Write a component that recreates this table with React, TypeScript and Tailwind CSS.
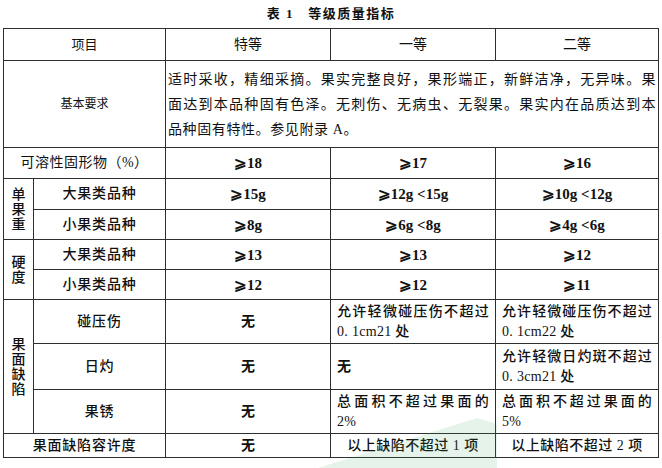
const font = "font-['Liberation_Serif','Noto_Sans_CJK_SC',serif]";
const cell = 'border border-[#2e2e2e] p-0 text-center align-middle leading-[18px]';
const num = 'border border-[#2e2e2e] p-0 text-center align-middle leading-[18px] text-[15px] font-bold';
const label = 'border border-[#2e2e2e] p-0 text-center align-middle leading-[18px] font-medium tracking-[0.8px]';

function Stack({ chars }: { chars: string }) {
  return (
    <div className="flex flex-col items-center text-[14px] leading-[15px] font-medium">
      {chars.split('').map((c, i) => (
        <span key={i}>{c}</span>
      ))}
    </div>
  );
}

function TwoLine({ first, second }: { first: string; second: string }) {
  return (
    <div className="px-[6px] text-left text-[14px] leading-[20px] font-medium tracking-[0.3px]">
      <div className="whitespace-nowrap text-justify [text-align-last:justify]">{first}</div>
      <div>{second}</div>
    </div>
  );
}

export default function App() {
  return (
    <div className={`relative h-[468px] w-[662px] overflow-hidden bg-white text-[#111] ${font}`}>
      <div className="flex h-[28px] items-center justify-center pb-[1px] text-[13px] font-bold tracking-[1.5px]">
        <span className="mr-[14px]">表 1</span>
        <span>等级质量指标</span>
      </div>

      <table className="ml-[3px] w-[655px] table-fixed border-collapse border-[1.5px] border-[#222]">
        <colgroup>
          <col className="w-[30px]" />
          <col className="w-[132px]" />
          <col className="w-[165px]" />
          <col className="w-[165px]" />
          <col className="w-[163px]" />
        </colgroup>
        <tbody>
          <tr className="h-[32px] text-[13px]">
            <td colSpan={2} className={cell}>项目</td>
            <td className={`${cell} text-[14px]`}>特等</td>
            <td className={`${cell} text-[14px]`}>一等</td>
            <td className={`${cell} text-[14px]`}>二等</td>
          </tr>
          <tr className="h-[87px]">
            <td colSpan={2} className={`${cell} text-[12px]`}>基本要求</td>
            <td colSpan={3} className={cell}>
              <div className="px-[2px] text-left text-[14px] leading-[25px] tracking-[0.6px]">
                <div className="whitespace-nowrap text-justify [text-align-last:justify]">
                  适时采收，精细采摘。果实完整良好，果形端正，新鲜洁净，无异味。果
                </div>
                <div className="whitespace-nowrap text-justify [text-align-last:justify]">
                  面达到本品种固有色泽。无刺伤、无病虫、无裂果。果实内在品质达到本
                </div>
                <div>品种固有特性。参见附录 A。</div>
              </div>
            </td>
          </tr>
          <tr className="h-[31px] text-[14px]">
            <td colSpan={2} className={`${cell} tracking-[0.5px]`}>可溶性固形物（%）</td>
            <td className={num}>⩾18</td>
            <td className={num}>⩾17</td>
            <td className={num}>⩾16</td>
          </tr>
          <tr className="h-[31px] text-[14px]">
            <td rowSpan={2} className={cell}>
              <Stack chars="单果重" />
            </td>
            <td className={label}>大果类品种</td>
            <td className={num}>⩾15g</td>
            <td className={num}>⩾12g &lt;15g</td>
            <td className={num}>⩾10g &lt;12g</td>
          </tr>
          <tr className="h-[30px] text-[14px]">
            <td className={label}>小果类品种</td>
            <td className={num}>⩾8g</td>
            <td className={num}>⩾6g &lt;8g</td>
            <td className={num}>⩾4g &lt;6g</td>
          </tr>
          <tr className="h-[30px] text-[14px]">
            <td rowSpan={2} className={cell}>
              <Stack chars="硬度" />
            </td>
            <td className={label}>大果类品种</td>
            <td className={num}>⩾13</td>
            <td className={num}>⩾13</td>
            <td className={num}>⩾12</td>
          </tr>
          <tr className="h-[30px] text-[14px]">
            <td className={label}>小果类品种</td>
            <td className={num}>⩾12</td>
            <td className={num}>⩾12</td>
            <td className={num}>⩾11</td>
          </tr>
          <tr className="h-[44px] text-[14px]">
            <td rowSpan={3} className={cell}>
              <Stack chars="果面缺陷" />
            </td>
            <td className={label}>碰压伤</td>
            <td className={`${cell} font-bold`}>无</td>
            <td className={cell}>
              <TwoLine first="允许轻微碰压伤不超过" second="0. 1cm21 处" />
            </td>
            <td className={cell}>
              <TwoLine first="允许轻微碰压伤不超过" second="0. 1cm22 处" />
            </td>
          </tr>
          <tr className="h-[46px] text-[14px]">
            <td className={label}>日灼</td>
            <td className={`${cell} font-bold`}>无</td>
            <td className={`${cell} px-[6px] text-left font-bold`}>无</td>
            <td className={cell}>
              <TwoLine first="允许轻微日灼斑不超过" second="0. 3cm21 处" />
            </td>
          </tr>
          <tr className="h-[44px] text-[14px]">
            <td className={label}>果锈</td>
            <td className={`${cell} font-bold`}>无</td>
            <td className={cell}>
              <TwoLine first="总面积不超过果面的" second="2%" />
            </td>
            <td className={cell}>
              <TwoLine first="总面积不超过果面的" second="5%" />
            </td>
          </tr>
          <tr className="h-[24px] text-[14px]">
            <td colSpan={2} className={label}>果面缺陷容许度</td>
            <td className={`${cell} font-bold`}>无</td>
            <td className={`${cell} font-medium tracking-[0.5px]`}>以上缺陷不超过 1 项</td>
            <td className={`${cell} font-medium tracking-[0.5px]`}>以上缺陷不超过 2 项</td>
          </tr>
        </tbody>
      </table>

      <svg className="pointer-events-none absolute left-0 top-0" width="662" height="468">
        <polygon points="477,418 497,424 497,468 318,468" fill="#3aa55c" opacity="0.13" />
      </svg>
    </div>
  );
}
